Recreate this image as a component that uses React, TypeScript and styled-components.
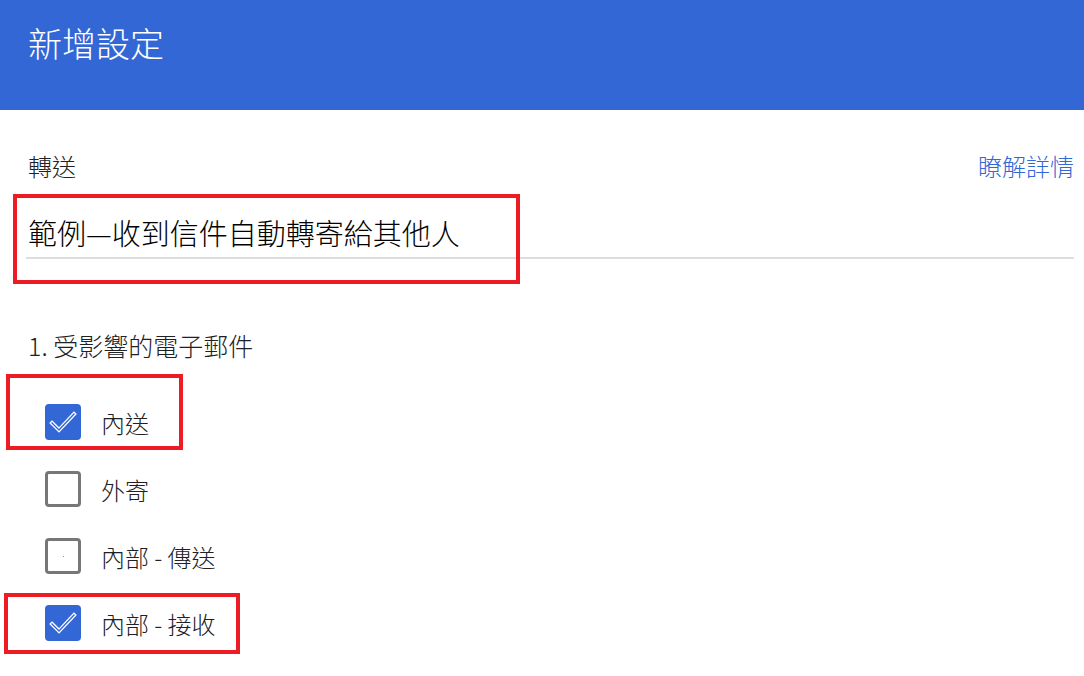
import React from 'react'
import styled, { createGlobalStyle } from 'styled-components'

const GlobalStyle = createGlobalStyle`
  html, body {
    margin: 0;
    padding: 0;
    background: #ffffff;
    font-family: 'Noto Sans CJK TC', 'Noto Sans', sans-serif;
    font-weight: 300;
    color: #202124;
  }
`

const Header = styled.header`
  height: 110px;
  background: #3367d6;
  box-sizing: border-box;
  padding: 20px 28px 0;
`

const Title = styled.h1`
  margin: 0;
  font-size: 34px;
  font-weight: 300;
  line-height: 46px;
  color: #ffffff;
`

const Body = styled.main`
  padding: 40px 10px 40px 28px;
`

const LabelRow = styled.div`
  display: flex;
  justify-content: space-between;
  align-items: center;
  height: 32px;
`

const Label = styled.span`
  font-size: 24px;
  line-height: 32px;
`

const Link = styled.a`
  font-size: 24px;
  line-height: 32px;
  color: #3367d6;
  text-decoration: none;
`

const Annotated = styled.div`
  position: relative;
`

const RedBox = styled.div<{ $top: number; $left: number; $width: number; $height: number }>`
  position: absolute;
  top: ${(p) => p.$top}px;
  left: ${(p) => p.$left}px;
  width: ${(p) => p.$width}px;
  height: ${(p) => p.$height}px;
  box-sizing: border-box;
  border: 4px solid #ed1c24;
  pointer-events: none;
`

const NameInput = styled.div`
  margin-top: 30px;
  height: 45px;
  border-bottom: 2px solid #dddddd;
  font-size: 29px;
  font-weight: 300;
  line-height: 40px;
  color: #000000;
  margin-left: -2px;
  padding-left: 2px;
`

const Section = styled.div`
  margin-top: 70px;
  font-size: 25px;
  line-height: 32px;
`

const List = styled.ul`
  list-style: none;
  margin: 43px 0 0;
  padding: 0 0 0 17px;
  display: flex;
  flex-direction: column;
  gap: 31px;
`

const Item = styled.div`
  display: flex;
  align-items: center;
  gap: 20px;
  height: 36px;
  font-size: 24px;
`

const Box = styled.span<{ $checked: boolean }>`
  width: 36px;
  height: 36px;
  box-sizing: border-box;
  border-radius: 4px;
  flex: none;
  background: ${(p) => (p.$checked ? '#3367d6' : '#ffffff')};
  border: ${(p) => (p.$checked ? 'none' : '3px solid #777777')};
  display: flex;
  align-items: center;
  justify-content: center;
`

const Dot = styled.span`
  width: 1px;
  height: 1px;
  background: #999999;
`

const Check = () => (
  <svg width="36" height="36" viewBox="0 0 36 36">
    <path d="M7 19 L14 26 L29 10" fill="none" stroke="#ffffff" strokeWidth="4" strokeLinecap="square" />
    <path d="M7 19 L14 26 L29 10" fill="none" stroke="#3367d6" strokeWidth="1.4" strokeLinecap="square" />
  </svg>
)

type Option = {
  label: string
  checked: boolean
  dot?: boolean
  mark?: { top: number; left: number; width: number; height: number }
}

const options: Option[] = [
  { label: '內送', checked: true, mark: { top: -30, left: -39, width: 177, height: 76 } },
  { label: '外寄', checked: false },
  { label: '內部 - 傳送', checked: false, dot: true },
  { label: '內部 - 接收', checked: true, mark: { top: -12, left: -41, width: 236, height: 61 } },
]

export default function App() {
  return (
    <>
      <GlobalStyle />
      <Header>
        <Title>新增設定</Title>
      </Header>
      <Body>
        <LabelRow>
          <Label>轉送</Label>
          <Link href="#">瞭解詳情</Link>
        </LabelRow>
        <Annotated>
          <NameInput>範例—收到信件自動轉寄給其他人</NameInput>
          <RedBox $top={-18} $left={-15} $width={507} $height={90} />
        </Annotated>
        <Section>1. 受影響的電子郵件</Section>
        <List>
          {options.map((o) => (
            <Annotated as="li" key={o.label}>
              <Item>
                <Box $checked={o.checked}>{o.checked ? <Check /> : o.dot ? <Dot /> : null}</Box>
                <span>{o.label}</span>
              </Item>
              {o.mark && (
                <RedBox $top={o.mark.top} $left={o.mark.left} $width={o.mark.width} $height={o.mark.height} />
              )}
            </Annotated>
          ))}
        </List>
      </Body>
    </>
  )
}
